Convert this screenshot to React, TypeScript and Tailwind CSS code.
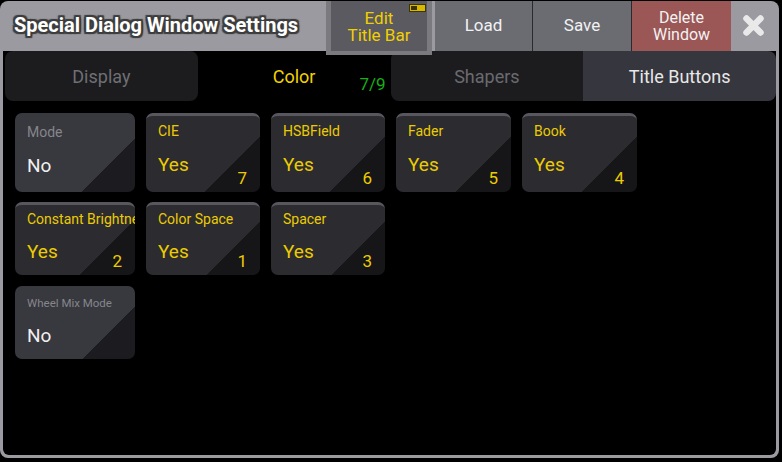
import { ReactNode } from "react";

type CardProps = {
  label: string;
  value: string;
  num?: number;
  on?: boolean;
  w: string;
  h: string;
  small?: boolean;
  tall?: boolean;
};

const Card = ({ label, value, num, on, w, h, small, tall }: CardProps) => {
  const bg = on
    ? "bg-[linear-gradient(135deg,#2b2b30_71%,#161619_71%)] border-t-[3px] border-[#57575d]"
    : "bg-[linear-gradient(135deg,#38383f_73%,#1c1c20_73%)]";
  return (
    <div className={`relative shrink-0 overflow-hidden rounded-[7px] px-[12px] ${bg} ${w} ${h}`}>
      <div
        className={`whitespace-nowrap ${tall ? (on ? "pt-[6px]" : "pt-[10px]") : on ? "pt-[5px]" : "pt-[8px]"} ${
          small ? "text-[11.5px] leading-[18px]" : "text-[14px] leading-[18px]"
        } ${on ? "text-[#eccc00]" : "text-[#86868b]"}`}
      >
        {label}
      </div>
      <div
        className={`${tall ? "mt-[13px]" : "mt-[12px]"} text-[19px] leading-[24px] ${on ? "text-[#eccc00]" : "text-[#f0f0f0]"}`}
      >
        {value}
      </div>
      {num !== undefined && (
        <span className="absolute right-[13px] bottom-[4px] text-[17px] leading-[20px] text-[#eccc00]">{num}</span>
      )}
    </div>
  );
};

const Tab = ({ children, className }: { children: ReactNode; className: string }) => (
  <div className={`relative flex w-[193px] items-center justify-center text-[18px] ${className}`}>{children}</div>
);

export default function App() {
  return (
    <div
      className="h-[462px] w-[782px] overflow-hidden bg-black"
      style={{ fontFamily: "Roboto, 'Liberation Sans', sans-serif" }}
    >
      <div className="mt-[1px] flex h-[457px] w-[779px] flex-col rounded-[8px] bg-[#9a9aa0] px-[3px] pb-[3px]">
        {/* title bar */}
        <div className="flex h-[50px] shrink-0">
          <div className="flex flex-1 items-center pl-[11px] pb-[2px] text-[20px] font-bold text-white [text-shadow:-2px_0_0_#3d3d3d,2px_0_0_#3d3d3d,0_-2px_0_#3d3d3d,0_2px_0_#3d3d3d,-1px_-1px_0_#3d3d3d,1px_-1px_0_#3d3d3d,-1px_1px_0_#3d3d3d,1px_1px_0_#3d3d3d,-2px_-2px_1px_#3d3d3d,2px_2px_1px_#3d3d3d,2px_-2px_1px_#3d3d3d,-2px_2px_1px_#3d3d3d]">
            Special Dialog Window Settings
          </div>
          <div className="relative z-10 mr-[3px] h-[54px] w-[106px] bg-[#7a7a7f] px-[5px] pb-[4px]">
            <div className="flex h-full flex-col items-center justify-center bg-[#5a5a60] pt-[2px] text-[17px] leading-[17px] text-[#f0d000]">
              <span className="block">Edit</span>
              <span className="block">Title Bar</span>
            </div>
            <span className="absolute top-[3px] right-[6px] flex h-[8px] w-[17px] border border-[#3b3300] bg-[#d8b800] p-[1px]">
              <span className="h-full w-[6px] bg-[#3b3300]" />
            </span>
          </div>
          <button className="flex w-[97px] items-center justify-center bg-[#6b6b72] text-[17px] text-[#f2f2f2]">Load</button>
          <button className="flex w-[99px] items-center justify-center border-l border-[#2a2a2e] bg-[#6b6b72] text-[17px] text-[#f2f2f2]">
            Save
          </button>
          <button className="flex w-[100px] flex-col items-center justify-center border-l border-[#2a2a2e] bg-[#9b5656] text-[16px] leading-[17px] text-[#f2f2f2]">
            <span className="block">Delete</span>
            <span className="block">Window</span>
          </button>
          <div className="flex w-[45px] items-center justify-center pb-[2px]">
            <svg width="23" height="23" viewBox="0 0 23 23">
              <path d="M4.5 4.5 L18.5 18.5 M18.5 4.5 L4.5 18.5" stroke="#e9e9ea" strokeWidth="6.5" strokeLinecap="round" />
            </svg>
          </div>
        </div>

        {/* body */}
        <div className="flex flex-1 flex-col rounded-b-[6px] bg-black">
          <div className="flex h-[50px] shrink-0 pl-[2px]">
            <Tab className="rounded-[8px] bg-[#1c1c1f] text-[#6f6f74]">Display</Tab>
            <Tab className="text-[#f2d200]">
              Color
              <span className="absolute right-[5px] bottom-[4px] text-[17px] text-[#17b017]">7/9</span>
            </Tab>
            <Tab className="rounded-l-[8px] bg-[#1c1c1f] text-[#6a6a6f]">Shapers</Tab>
            <Tab className="w-[192px] rounded-r-[8px] bg-[#36363e] text-[#e8e8e8]">Title Buttons</Tab>
          </div>

          <div className="flex flex-col gap-[10px] pt-[12px] pl-[12px]">
            <div className="flex gap-[11px]">
              <Card label="Mode" value="No" w="w-[120px]" h="h-[79px]" tall />
              <Card label="CIE" value="Yes" num={7} on w="w-[114px]" h="h-[79px]" tall />
              <Card label="HSBField" value="Yes" num={6} on w="w-[114px]" h="h-[79px]" tall />
              <Card label="Fader" value="Yes" num={5} on w="w-[115px]" h="h-[79px]" tall />
              <Card label="Book" value="Yes" num={4} on w="w-[115px]" h="h-[79px]" tall />
            </div>
            <div className="flex gap-[11px]">
              <Card label="Constant Brightness" value="Yes" num={2} on w="w-[120px]" h="h-[73px]" />
              <Card label="Color Space" value="Yes" num={1} on w="w-[114px]" h="h-[73px]" />
              <Card label="Spacer" value="Yes" num={3} on w="w-[114px]" h="h-[73px]" />
            </div>
            <div className="mt-[1px] flex gap-[11px]">
              <Card label="Wheel Mix Mode" value="No" small w="w-[120px]" h="h-[73px]" />
            </div>
          </div>
        </div>
      </div>
    </div>
  );
}
